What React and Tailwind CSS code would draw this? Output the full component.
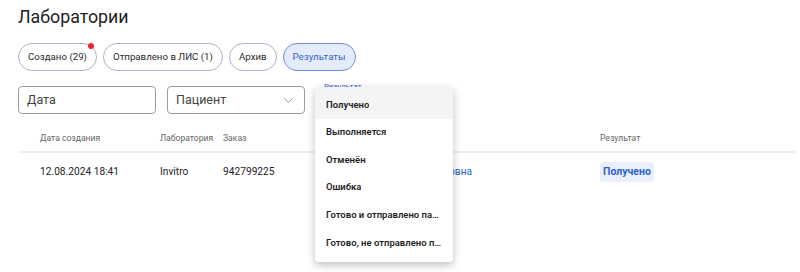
import { ChevronDown } from 'lucide-react';

const chips = [
  { label: 'Создано (29)', dot: true },
  { label: 'Отправлено в ЛИС (1)' },
  { label: 'Архив' },
  { label: 'Результаты', active: true },
];

const menuItems = [
  'Получено',
  'Выполняется',
  'Отменён',
  'Ошибка',
  'Готово и отправлено пациенту',
  'Готово, не отправлено пациенту',
];

export default function App() {
  return (
    <div className="relative w-[800px] h-[272px] bg-white overflow-hidden font-['Roboto',sans-serif] text-[#222]">
      <div className="pl-[18px] pr-[5px] pt-[4px]">
        {/* TITLE */}
        <h1 className="text-[17.8px] leading-[26px] font-normal text-[#222]">Лаборатории</h1>

        {/* CHIPS */}
        <div className="flex gap-[6px] mt-[13px]">
          {chips.map((c) => (
            <button
              key={c.label}
              className={`relative h-[28px] px-[9px] rounded-full border text-[9.7px] leading-none ${
                c.active
                  ? 'bg-[#e4ecfb] border-[#6b90dc] text-[#3565c9]'
                  : 'bg-white border-[#aab4c6] text-[#2a2a2a]'
              }`}
            >
              {c.label}
              {c.dot && <span className="absolute top-[-1px] right-[2px] w-[6px] h-[6px] rounded-full bg-[#e8262b]" />}
            </button>
          ))}
        </div>

        {/* FILTERS */}
        <div className="flex gap-[11px] mt-[15px]">
          <div className="w-[138px] h-[28px] border border-[#9c9c9c] rounded-[4px] flex items-center px-[8px] text-[12.5px] text-[#444]">
            Дата
          </div>
          <div className="w-[138px] h-[28px] border border-[#9c9c9c] rounded-[4px] flex items-center justify-between pl-[8px] pr-[8px] text-[12.5px] text-[#444]">
            Пациент
            <ChevronDown size={15} strokeWidth={1.3} className="text-[#777]" />
          </div>
        </div>

        {/* TABLE */}
        <div className="mt-[11px]">
          <div className="flex items-center h-[28px] border-b-2 border-[#eeeeee] text-[8.6px] text-[#666]">
            <div className="w-[142px] pl-[22px]">Дата создания</div>
            <div className="w-[63px]">Лаборатория</div>
            <div className="w-[109px]">Заказ</div>
            <div className="w-[268px]">Пациент</div>
            <div>Результат</div>
          </div>
          <div className="flex items-center h-[38px] text-[10.2px] text-[#222]">
            <div className="w-[142px] pl-[22px]">12.08.2024 18:41</div>
            <div className="w-[63px]">Invitro</div>
            <div className="w-[109px]">942799225</div>
            <div className="w-[268px] pl-[16px] text-[#2f62c9]">Смирнова Анна Петровна</div>
            <div>
              <span className="inline-block px-[3px] py-[2px] rounded-[3px] bg-[#e9effb] text-[#2f62c9] font-bold text-[10.5px]">
                Получено
              </span>
            </div>
          </div>
        </div>
      </div>

      {/* SELECT LABEL (behind menu) */}
      <span className="absolute left-[324px] top-[81px] text-[8px] text-[#3565c9]">Результат</span>

      {/* DROPDOWN MENU */}
      <div className="absolute left-[315px] top-[87px] w-[138px] bg-white rounded-[4px] shadow-[0_3px_8px_rgba(0,0,0,0.25)] overflow-hidden pb-[5px]">
        {menuItems.map((item, i) => (
          <div
            key={item}
            className={`flex items-center pl-[11px] pr-[9px] text-[9.5px] font-semibold text-[#1f1f1f] ${
              i === 0 ? 'bg-[#f4f4f4] h-[31.6px] pt-[4px]' : 'h-[27.6px]'
            }`}
          >
            <span className="truncate">{item}</span>
          </div>
        ))}
      </div>
    </div>
  );
}
